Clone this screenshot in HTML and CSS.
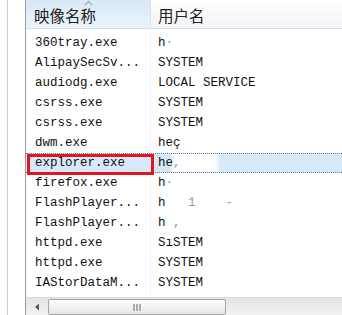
FILE: index.html
```html
<!DOCTYPE html>
<html>
<head>
<meta charset="utf-8">
<link rel="stylesheet" href="styles.css">
</head>
<body>
<div class="window">
  <div class="gutter"></div>
  <div class="list">
    <div class="header">
      <div class="hcell c1 sorted">映像名称
        <svg class="sort" width="9" height="6" viewBox="0 0 9 6"><path d="M1 5 L4.5 1.5 L8 5" fill="none" stroke="#9fb3c8" stroke-width="1.3"/></svg>
      </div>
      <div class="hsep"></div>
      <div class="hcell c2">用户名</div>
    </div>
    <div class="rows">
      <div class="row"><div class="cell c1">360tray.exe</div><div class="sep"></div><div class="cell c2">h<span class="blur">·</span></div></div>
      <div class="row"><div class="cell c1">AlipaySecSv...</div><div class="sep"></div><div class="cell c2">SYSTEM</div></div>
      <div class="row"><div class="cell c1">audiodg.exe</div><div class="sep"></div><div class="cell c2">LOCAL SERVICE</div></div>
      <div class="row"><div class="cell c1">csrss.exe</div><div class="sep"></div><div class="cell c2">SYSTEM</div></div>
      <div class="row"><div class="cell c1">csrss.exe</div><div class="sep"></div><div class="cell c2">SYSTEM</div></div>
      <div class="row"><div class="cell c1">dwm.exe</div><div class="sep"></div><div class="cell c2">heç</div></div>
      <div class="row selected"><div class="cell c1">explorer.exe</div><div class="sep"></div><div class="cell c2 masked">he<span class="blur">,</span></div></div>
      <div class="row"><div class="cell c1">firefox.exe</div><div class="sep"></div><div class="cell c2">h<span class="blur">·</span></div></div>
      <div class="row"><div class="cell c1">FlashPlayer...</div><div class="sep"></div><div class="cell c2">h&nbsp;&nbsp;&nbsp;<span class="blur">1</span>&nbsp;&nbsp;&nbsp;&nbsp;<span class="blur">-</span></div></div>
      <div class="row"><div class="cell c1">FlashPlayer...</div><div class="sep"></div><div class="cell c2">h<span class="blur">&nbsp;,</span></div></div>
      <div class="row"><div class="cell c1">httpd.exe</div><div class="sep"></div><div class="cell c2">SıSTEM</div></div>
      <div class="row"><div class="cell c1">httpd.exe</div><div class="sep"></div><div class="cell c2">SYSTEM</div></div>
      <div class="row"><div class="cell c1">IAStorDataM...</div><div class="sep"></div><div class="cell c2">SYSTEM</div></div>
      <div class="row"><div class="cell c1">IAStorIcon...</div><div class="sep"></div><div class="cell c2">h<span class="blur">·</span></div></div>
    </div>
    <div class="hscroll">
      <div class="arrow">
        <svg width="6" height="8" viewBox="0 0 6 8"><path d="M5 0.5 L1 4 L5 7.5 Z" fill="#5a5a5a"/></svg>
      </div>
      <div class="thumb">
        <svg width="8" height="7" viewBox="0 0 8 7"><path d="M1 0 V7 M4 0 V7 M7 0 V7" stroke="#6a6a6a" stroke-width="1"/></svg>
      </div>
      <div class="track"></div>
    </div>
  </div>
  <div class="highlight"></div>
</div>
</body>
</html>
```
FILE: styles.css
```css
html, body {
  margin: 0;
  padding: 0;
  background: #ffffff;
}
.window {
  position: relative;
  display: flex;
  width: 342px;
  height: 315px;
  overflow: hidden;
  background: #ffffff;
}
.gutter {
  width: 7px;
  border-right: 1px solid #cfcfcf;
  margin-right: 17px;
  flex: none;
}
.list {
  flex: 1;
  display: flex;
  flex-direction: column;
  border-left: 1px solid #9c9c9c;
  min-width: 0;
}
.header {
  display: flex;
  height: 28px;
  border-bottom: 1px solid #d6dde6;
  flex: none;
}
.hcell {
  position: relative;
  display: flex;
  align-items: center;
  font-family: "Noto Sans CJK SC", sans-serif;
  font-size: 15.5px;
  color: #222;
  padding-top: 1px;
}
.hcell.c1 {
  width: 124px;
  padding-left: 8px;
  box-sizing: border-box;
  background: linear-gradient(#d8e8f6, #eaf3fb);
}
.hcell.c2 {
  flex: 1;
  padding-left: 7px;
  background: linear-gradient(#ffffff, #f2f3f5);
}
.sort {
  position: absolute;
  left: 58px;
  top: 0px;
}
.hsep {
  width: 1px;
  background: #dde3ea;
  flex: none;
}
.rows {
  flex: 1;
  overflow: hidden;
  padding-top: 4px;
}
.row {
  display: flex;
  height: 20px;
  align-items: center;
  font-family: "Liberation Mono", monospace;
  font-size: 12.5px;
  color: #111;
  box-sizing: border-box;
}
.cell {
  white-space: nowrap;
  overflow: hidden;
  line-height: 20px;
}
.cell.c1 {
  width: 124px;
  padding-left: 9px;
  box-sizing: border-box;
  flex: none;
}
.cell.c2 {
  flex: 1;
  padding-left: 7px;
}
.sep {
  width: 1px;
  height: 20px;
  background: #eef0f2;
  flex: none;
}
.blur {
  color: #9a9a9a;
}
.row.selected {
  background: #d6e8fa;
  border-top: 1px dotted #6c84a8;
  border-bottom: 1px dotted #6c84a8;
}
.row.selected .cell {
  line-height: 18px;
}
.row.selected .sep {
  height: 18px;
  background: #d6e8fa;
}
.row.selected .c2.masked {
  background: linear-gradient(90deg, #d6e8fa 0, #d6e8fa 20px, #ffffff 22px, #ffffff 64px, #d6e8fa 70px);
}
.hscroll {
  flex: none;
  height: 17px;
  display: flex;
  align-items: stretch;
  border-top: 1px solid #dadada;
  background: linear-gradient(#e6e6e6, #f1f1f1);
}
.arrow {
  width: 21px;
  display: flex;
  align-items: center;
  justify-content: center;
  flex: none;
}
.thumb {
  width: 178px;
  margin: 1px 0 0 1px;
  box-sizing: border-box;
  border: 1px solid #a4a4a4;
  border-radius: 2px;
  background: linear-gradient(#fdfdfd, #e6e6e6);
  display: flex;
  align-items: center;
  justify-content: center;
  flex: none;
}
.track {
  flex: 1;
}
.highlight {
  position: absolute;
  left: 27px;
  top: 154px;
  width: 127px;
  height: 21px;
  box-sizing: border-box;
  border: 3px solid #e2161c;
}
```
